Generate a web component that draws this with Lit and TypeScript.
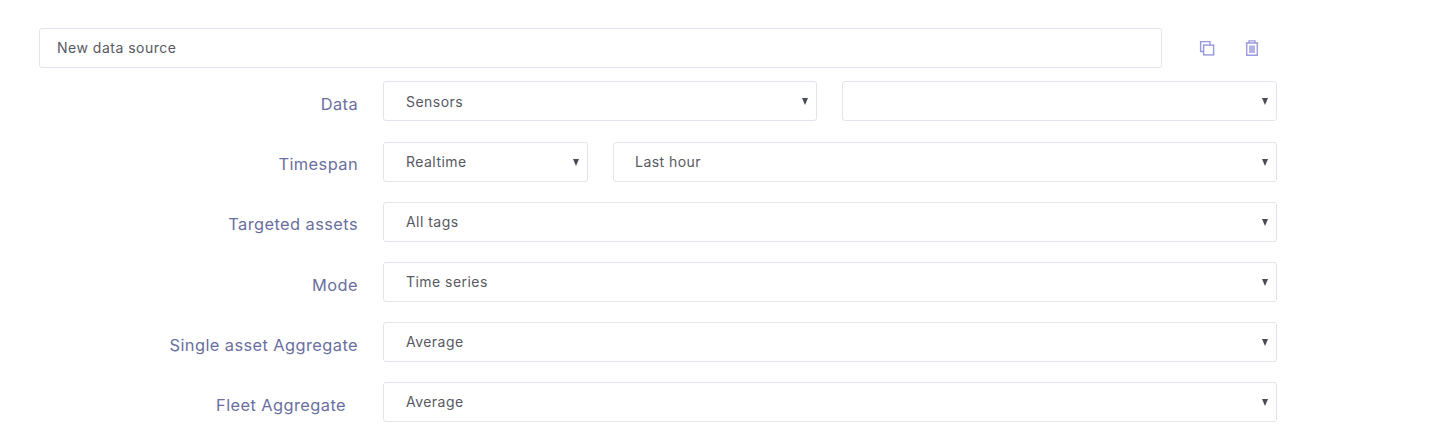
import { LitElement, html, css } from "lit";
import { customElement } from "lit/decorators.js";

const caret = html`<span class="caret"></span>`;
const sel = (text: string, cls = "") => html`<div class="sel ${cls}"><span class="val">${text}</span>${caret}</div>`;

@customElement("app-root")
export class AppRoot extends LitElement {
  static styles = css`
    :host { display: block; width: 1430px; height: 435px; background: #fff; overflow: hidden; font-family: Inter, "Noto Sans", sans-serif; font-size: 14px; color: #575962; }
    .page { padding: 28px 0 0 39px; display: flex; flex-direction: column; }
    .top { display: flex; align-items: center; height: 40px; margin-bottom: 13px; }
    .name { box-sizing: border-box; width: 1123px; height: 40px; border: 1px solid #e4e4ee; border-radius: 3px; padding: 0 0 2px 17px; display: flex; align-items: center; font-size: 14px; letter-spacing: 0.5px; }
    .icons { display: flex; align-items: center; margin-left: 37px; gap: 29px; }
    .icons svg { display: block; }
    .row { display: flex; height: 40px; margin-bottom: 20px; }
    .row.first { margin-bottom: 21px; }
    .label { width: 319px; flex: none; text-align: right; font-size: 16.4px; line-height: 47px; color: #6a6f9f; letter-spacing: 0.42px; white-space: nowrap; }
    .label.t { line-height: 45px; }
    .label.fleet { width: 307px; margin-right: 12px; line-height: 47px; }
    .fields { margin-left: 25px; width: 894px; display: flex; }
    .sel { box-sizing: border-box; height: 40px; border: 1px solid #e4e4ee; border-radius: 3px; position: relative; padding-left: 22px; line-height: 38px; font-size: 14px; letter-spacing: 0.46px; flex: 1; }
    .caret { position: absolute; right: 8px; top: 16px; width: 0; height: 0; border-left: 3.5px solid transparent; border-right: 3.5px solid transparent; border-top: 7px solid #4a4c55; }
    .w434 { flex: none; width: 434px; margin-right: 25px; line-height: 40px; }
    .w435 { flex: none; width: 435px; }
    .w205 { flex: none; width: 205px; margin-right: 25px; }
    .w664 { flex: none; width: 664px; padding-left: 21px; }
  `;
  render() {
    return html`<div class="page">
      <div class="top">
        <div class="name">New data source</div>
        <div class="icons">
          <svg width="16" height="16" viewBox="0 0 16 16" fill="none" stroke="#9498e0" stroke-width="1.4"><path d="M4.5 11.5H1.6V1.6H11V5"/><rect x="4.6" y="5.1" width="10" height="9.8"/></svg>
          <svg width="16" height="16" viewBox="0 0 16 16" fill="none" stroke="#9a9ade" stroke-width="1.4"><path d="M1.7 3h12.6M5 3V.9h6V3"/><path d="M2.7 3v12.2h10.6V3"/><path stroke-width="1.5" d="M6 5.5v7.5M8 5.5v7.5M10 5.5v7.5"/></svg>
        </div>
      </div>
      <div class="row first"><div class="label">Data</div><div class="fields">${sel("Sensors", "w434")}${sel("", "w435")}</div></div>
      <div class="row"><div class="label t">Timespan</div><div class="fields">${sel("Realtime", "w205")}${sel("Last hour", "w664")}</div></div>
      <div class="row"><div class="label t">Targeted assets</div><div class="fields">${sel("All tags")}</div></div>
      <div class="row"><div class="label">Mode</div><div class="fields">${sel("Time series")}</div></div>
      <div class="row"><div class="label">Single asset Aggregate</div><div class="fields">${sel("Average")}</div></div>
      <div class="row"><div class="label fleet">Fleet Aggregate</div><div class="fields">${sel("Average")}</div></div>
    </div>`;
  }
}
